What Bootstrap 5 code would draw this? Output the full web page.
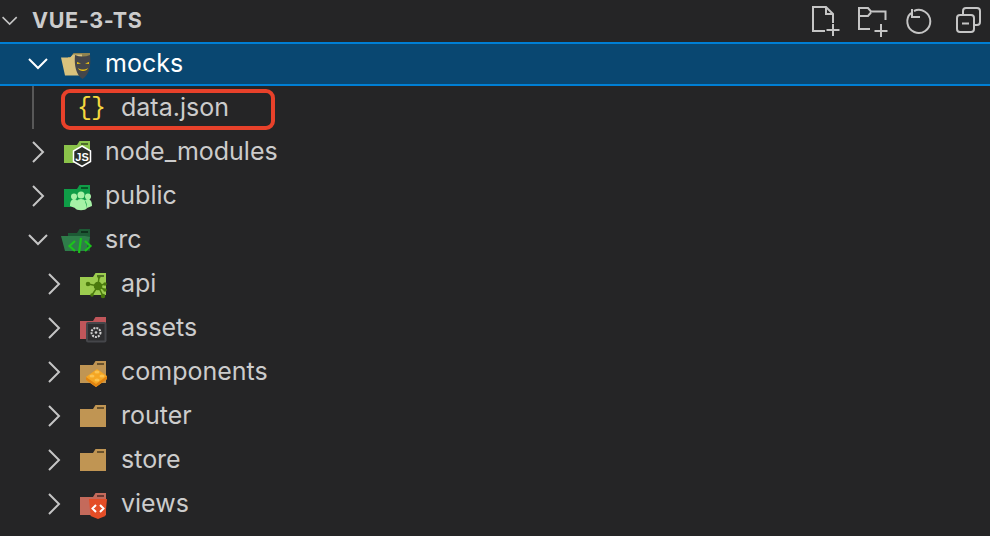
<!DOCTYPE html>
<html lang="en">
<head>
  <meta charset="UTF-8" />
  <title>VUE-3-TS</title>
  <link rel="stylesheet" href="https://cdn.jsdelivr.net/npm/bootstrap@5.3.0/dist/css/bootstrap.min.css"/>
  <style>
    body { background: #252526; overflow: hidden; font-family: Inter, "Noto Sans", sans-serif; color: #cccccc; }
    .side-head { height: 42px; padding-left: 1px; }
    .side-title { font-size: 21.5px; font-weight: 700; margin-left: 9px; letter-spacing: .6px; line-height: 1; }
    .head-tools { padding-right: 8px; gap: 12px; }
    .tool-svg { width: 34px; height: 34px; fill: none; stroke: #c5c5c5; stroke-width: 2; }
    .tree-row { height: 44px; padding-left: 24px; position: relative; font-size: 25px; }
    .tree-row.lvl-1 { padding-left: 40px; }
    .tree-row.picked { background: #094771; color: #fff; border-top: 2px solid #007fd4; border-bottom: 2px solid #007fd4; }
    .chev-svg { width: 28px; height: 28px; fill: none; stroke: #c5c5c5; stroke-width: 2; flex: none; }
    .picked .chev-svg { stroke: #fff; }
    .file-svg { width: 32px; height: 32px; margin-left: 8px; margin-right: 13px; flex: none; overflow: visible; }
    .guide-line { position: absolute; left: 32px; top: 0; bottom: 1px; width: 2px; background: #585858; }
    .red-box { position: absolute; left: 61px; top: 3px; width: 214px; height: 41px; border: 4px solid #e8412a; border-radius: 9px; }
    .braces { font-family: "Liberation Mono", monospace; font-size: 25px; fill: #f4d73e; }
    .slot-mark { fill: #000; opacity: .45; }
  </style>
</head>
<body>
  <!-- explorer header -->
  <div class="side-head d-flex align-items-center">
    <svg class="chev-svg" viewBox="0 0 28 28" style="width:22px"><path d="M2 9l9 9 9-9"/></svg>
    <span class="side-title">VUE-3-TS</span>
    <div class="head-tools d-flex ms-auto">
      <svg class="tool-svg" viewBox="0 0 34 34"><path d="M15 27H3V3h13l7 7v9M16 3v7h7M23 20v12M16.500 26h13"/></svg>
      <svg class="tool-svg" viewBox="0 0 34 34"><path d="M14 25H3V4h9l3 3.500h14.500V16M3 12h9l3-3.500M25 20v13M18.500 27h13"/></svg>
      <svg class="tool-svg" viewBox="0 0 34 34"><path d="M12 7A11.500 11.500 0 1 1 9 9M10 5v8h8"/></svg>
      <svg class="tool-svg" viewBox="0 0 34 34"><rect x="9" y="11" width="17" height="17" rx="3"/><path d="M14 19.500h7M15 11V7a3 3 0 0 1 3-3h11a3 3 0 0 1 3 3v11a3 3 0 0 1-3 3h-3"/></svg>
    </div>
  </div>

  <div class="tree-list">
    <div class="tree-row picked d-flex align-items-center">
      <svg class="chev-svg" viewBox="0 0 28 28"><path d="M5 9l9 9 9-9"/></svg>
      <svg class="file-svg" viewBox="0 0 32 32">
        <path fill="#8f8350" d="M8 9h3l2.500-4H30v6H8z"/>
        <path fill="#d9c27d" d="M1 9.500h9l3-3h9v21H5z"/>
        <path fill="#45464a" d="M15 7c5 2 10 2 15 0 1 10 0 19-7.500 24C16 27 14 17 15 7z"/>
        <path fill="#f1c40f" d="M17 14l4 1.500-4 .5zM29 14l-4 1.500 4 .5zM18 20c3 2 7 2 10 0-1 4-9 4-10 0z"/>
      </svg>
      <span>mocks</span>
    </div>

    <div class="tree-row lvl-1 d-flex align-items-center">
      <span class="guide-line"></span>
      <span class="chev-svg"></span>
      <svg class="file-svg" viewBox="0 0 32 32"><text class="braces" x="1" y="23">{</text><text class="braces" x="15" y="23">}</text></svg>
      <span>data.json</span>
      <span class="red-box"></span>
    </div>

    <div class="tree-row d-flex align-items-center">
      <svg class="chev-svg" viewBox="0 0 28 28"><path d="M9 4l10 10-10 10"/></svg>
      <svg class="file-svg" viewBox="0 0 32 32">
        <path fill="#8bc34a" d="M4 9h13l2.500-4H30v22H4z"/>
        <rect class="slot-mark" x="21" y="7" width="7" height="2"/>
        <path fill="#2b2f2a" stroke="#fff" stroke-width="1.500" d="M22 10l8.500 5v10.500L22 30.500l-8.500-5V15z"/>
        <text x="22" y="25" text-anchor="middle" fill="#fff" font-family="Liberation Sans, sans-serif" font-size="11" font-weight="700">JS</text>
      </svg>
      <span>node_modules</span>
    </div>

    <div class="tree-row d-flex align-items-center">
      <svg class="chev-svg" viewBox="0 0 28 28"><path d="M9 4l10 10-10 10"/></svg>
      <svg class="file-svg" viewBox="0 0 32 32">
        <path fill="#0f9d47" d="M4 9h13l2.500-4H30v22H4z"/>
        <rect class="slot-mark" x="21" y="7" width="7" height="2"/>
        <g fill="#a6f2a6">
          <circle cx="14" cy="16.500" r="3"/><circle cx="28" cy="16.500" r="3"/><circle cx="21" cy="15" r="3.500"/>
          <path d="M10 26c0-5 2-7 4-7s3 1 3 2l-2 7zM32 26c0-5-2-7-4-7s-3 1-3 2l2 7zM15 28c0-6 2-9 6-9s6 3 6 9c-1 3-11 3-12 0z"/>
        </g>
      </svg>
      <span>public</span>
    </div>

    <div class="tree-row d-flex align-items-center">
      <svg class="chev-svg" viewBox="0 0 28 28"><path d="M5 9l9 9 9-9"/></svg>
      <svg class="file-svg" viewBox="0 0 32 32">
        <path fill="#1d5a35" d="M8 11V9h9l2.500-4H30v22H8z"/>
        <rect class="slot-mark" x="21" y="7" width="7" height="2"/>
        <path fill="#2f7d4a" d="M1 12h24l5 1-4 14H5z"/>
        <path fill="none" stroke="#1bc41b" stroke-width="2.200" d="M15 17l-5.500 5 5.500 5M25 17l5.500 5-5.500 5M21 14l-2 15"/>
      </svg>
      <span>src</span>
    </div>

    <div class="tree-row lvl-1 d-flex align-items-center">
      <svg class="chev-svg" viewBox="0 0 28 28"><path d="M9 4l10 10-10 10"/></svg>
      <svg class="file-svg" viewBox="0 0 32 32">
        <path fill="#9ccc4f" d="M4 9h13l2.500-4H30v22H4z"/>
        <rect class="slot-mark" x="21" y="7" width="7" height="2"/>
        <g fill="#4b7a0e" stroke="#4b7a0e" stroke-width="1.500">
          <circle cx="22" cy="18" r="3.500"/><circle cx="12" cy="16" r="1.500"/><circle cx="29" cy="16" r="1"/><circle cx="29" cy="22" r="1"/><circle cx="16" cy="27" r="1"/><circle cx="27" cy="28" r="1.500"/><circle cx="23" cy="9" r=".8"/>
          <path d="M12 16l10 2 7-2M22 18l7 4M22 18l-6 9M22 18l5 10M22 18l1-9" fill="none"/>
        </g>
      </svg>
      <span>api</span>
    </div>

    <div class="tree-row lvl-1 d-flex align-items-center">
      <svg class="chev-svg" viewBox="0 0 28 28"><path d="M9 4l10 10-10 10"/></svg>
      <svg class="file-svg" viewBox="0 0 32 32">
        <path fill="#c0565a" d="M4 9h13l2.500-4H30v22H4z"/>
        <rect x="10" y="10" width="20.500" height="20.500" rx="2" fill="#45464a"/>
        <rect x="12" y="12" width="16.500" height="16.500" fill="#2d2d2f"/>
        <circle cx="20" cy="20.500" r="4.500" fill="none" stroke="#d0d0d0" stroke-width="2" stroke-dasharray="2 1"/>
        <circle cx="20" cy="20.500" r="1.300" fill="#d0d0d0"/>
      </svg>
      <span>assets</span>
    </div>

    <div class="tree-row lvl-1 d-flex align-items-center">
      <svg class="chev-svg" viewBox="0 0 28 28"><path d="M9 4l10 10-10 10"/></svg>
      <svg class="file-svg" viewBox="0 0 32 32">
        <path fill="#c09553" d="M4 9h13l2.500-4H30v22H4z"/>
        <rect class="slot-mark" x="21" y="7" width="7" height="2"/>
        <path fill="#f5a623" d="M10 21l11-8 10 7v3l-11 8-10-7z"/>
        <path fill="#e08412" d="M10 21l10 7v3l-10-7zM31 20v3l-11 8v-3z"/>
        <g fill="#fbc24f"><ellipse cx="21" cy="16" rx="2.500" ry="1.500"/><ellipse cx="16" cy="20" rx="2.500" ry="1.500"/><ellipse cx="26" cy="20" rx="2.500" ry="1.500"/><ellipse cx="21" cy="24" rx="2.500" ry="1.500"/></g>
      </svg>
      <span>components</span>
    </div>

    <div class="tree-row lvl-1 d-flex align-items-center">
      <svg class="chev-svg" viewBox="0 0 28 28"><path d="M9 4l10 10-10 10"/></svg>
      <svg class="file-svg" viewBox="0 0 32 32">
        <path fill="#c09553" d="M4 9h13l2.500-4H30v22H4z"/>
        <rect class="slot-mark" x="21" y="7" width="7" height="2"/>
      </svg>
      <span>router</span>
    </div>

    <div class="tree-row lvl-1 d-flex align-items-center">
      <svg class="chev-svg" viewBox="0 0 28 28"><path d="M9 4l10 10-10 10"/></svg>
      <svg class="file-svg" viewBox="0 0 32 32">
        <path fill="#c09553" d="M4 9h13l2.500-4H30v22H4z"/>
        <rect class="slot-mark" x="21" y="7" width="7" height="2"/>
      </svg>
      <span>store</span>
    </div>

    <div class="tree-row lvl-1 d-flex align-items-center">
      <svg class="chev-svg" viewBox="0 0 28 28"><path d="M9 4l10 10-10 10"/></svg>
      <svg class="file-svg" viewBox="0 0 32 32">
        <path fill="#c46a5b" d="M4 9h13l2.500-4H30v22H4z"/>
        <rect class="slot-mark" x="21" y="7" width="7" height="2"/>
        <path fill="#e44d26" d="M13 11h18l-1.600 17L22 31l-7.400-3z"/>
        <path fill="none" stroke="#fff" stroke-width="2" d="M20 17l-3.500 3.500L20 24M24 17l3.500 3.500L24 24"/>
      </svg>
      <span>views</span>
    </div>
  </div>
</body>
</html>
